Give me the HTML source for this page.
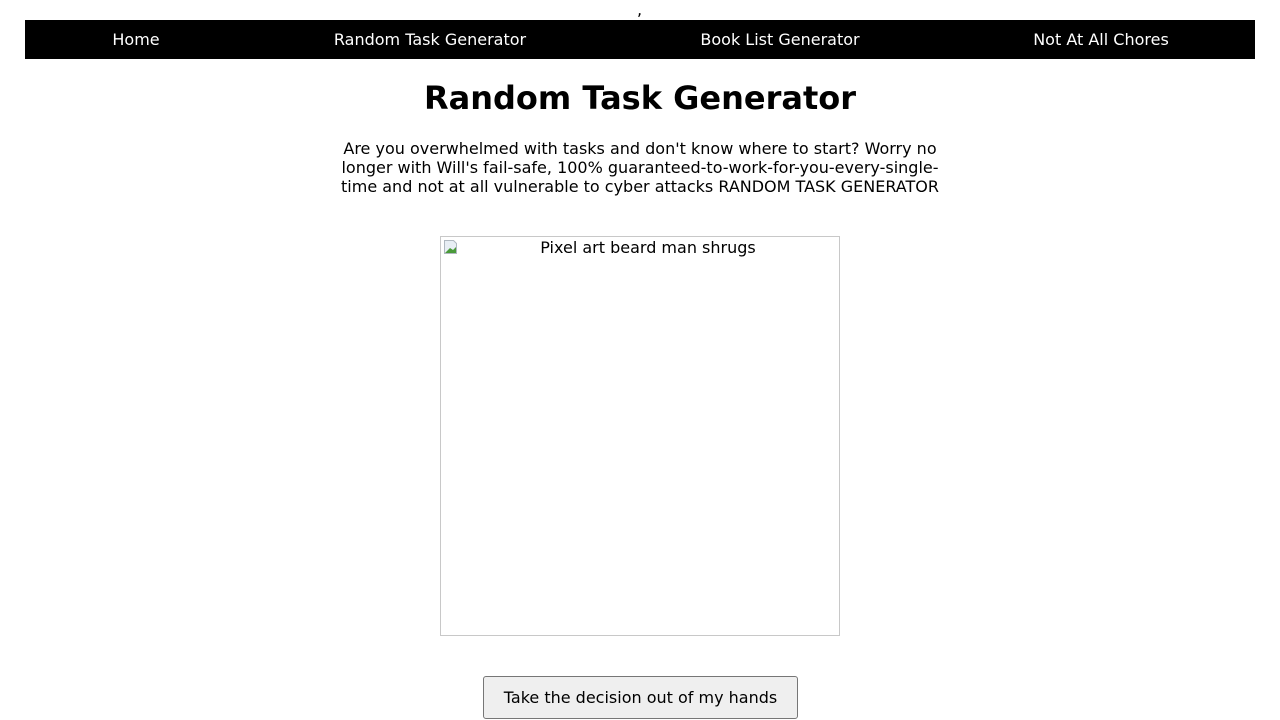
<!DOCTYPE html>
<html><head><meta charset="utf-8"><style>
html,body{margin:0;padding:0;background:#fff;width:1280px;height:720px;overflow:hidden;font-family:"DejaVu Sans","Liberation Sans",sans-serif;color:#000}
.comma{position:absolute;left:637px;top:2px;font-size:16px;line-height:16px}
nav{position:absolute;left:25px;top:20px;width:1230px;height:39px;background:#000}
nav span{position:absolute;top:0;line-height:39px;color:#fff;font-size:16px;transform:translateX(-50%);white-space:nowrap}
h1{position:absolute;left:0;width:1280px;top:79px;margin:0;text-align:center;font-size:32px;line-height:38px;font-weight:bold}
p{position:absolute;left:330px;width:620px;top:139px;margin:0;text-align:center;font-size:16px;line-height:19px}
.img{position:absolute;left:440px;top:236px;width:382px;padding-left:16px;height:398px;border:1px solid #c8c8c8;text-align:center;font-size:16px;line-height:22px}
.img svg{position:absolute;left:2px;top:2px}
button{position:absolute;left:483px;top:676px;width:315px;height:43px;background:#efefef;border:1px solid #767676;border-radius:3px;font-family:inherit;font-size:16px;color:#000;padding:0}
</style></head><body>
<div class="comma">,</div>
<nav>
<span style="left:111px">Home</span>
<span style="left:405px">Random Task Generator</span>
<span style="left:755px">Book List Generator</span>
<span style="left:1076px">Not At All Chores</span>
</nav>
<h1>Random Task Generator</h1>
<p>Are you overwhelmed with tasks and don't know where to start? Worry no longer with Will's fail-safe, 100% guaranteed-to-work-for-you-every-single-time and not at all vulnerable to cyber attacks RANDOM TASK GENERATOR</p>
<div class="img"><svg width="16" height="16" viewBox="0 0 16 16"><path d="M1.5 1.5h9l3 3v10h-12z" fill="#e8eef4" stroke="#b0b8c0" stroke-width="1"/><path d="M2 14l5-5 3 2 3-3v6z" fill="#4a9a3a"/></svg>Pixel art beard man shrugs</div>
<button>Take the decision out of my hands</button>
</body></html>
